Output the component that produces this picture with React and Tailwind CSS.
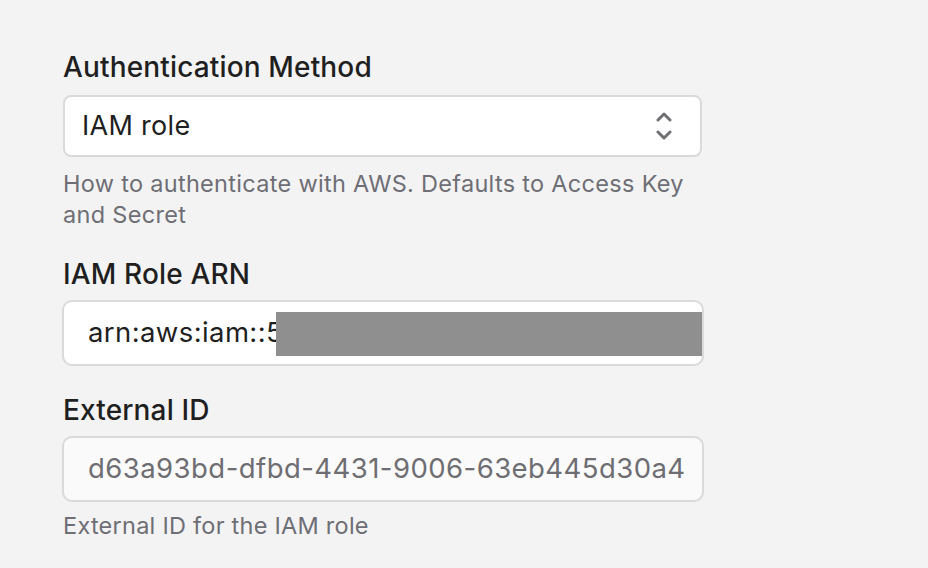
export default function App() {
  return (
    <main
      className="min-h-screen w-[928px] h-[568px] overflow-hidden bg-[#f3f3f3] text-[#1f1f1f]"
      style={{ fontFamily: "Inter, 'Noto Sans', sans-serif" }}
    >
      <div className="ml-[63px] w-[641px] pt-[50px]">
        {/* Auth method */}
        <label className="block text-[28px] leading-[34px] font-medium tracking-[0.15px]">Authentication Method</label>
        <div className="mt-[11px] w-[639px] h-[62px] flex items-center justify-between rounded-[8px] border-2 border-[#dadadd] bg-white pl-[17px] pr-[28px]">
          <span className="text-[27px] tracking-[0.3px]">IAM role</span>
          <svg width="16" height="30" viewBox="0 0 16 30" fill="none" stroke="#707074" strokeWidth="3" strokeLinecap="round" strokeLinejoin="round">
            <path d="M2 9 L8 3 L14 9" />
            <path d="M2 21 L8 27 L14 21" />
          </svg>
        </div>
        <p className="mt-[11px] text-[23.5px] leading-[31px] text-[#6e6e75] w-[630px] tracking-[0.3px]">
          How to authenticate with AWS. Defaults to Access Key and Secret
        </p>

        {/* Role ARN */}
        <label className="mt-[27px] block text-[28px] leading-[34px] font-medium tracking-[0.15px]">IAM Role ARN</label>
        <div className="relative mt-[9px] -ml-px w-[642px] h-[66px] flex items-center rounded-[10px] border-2 border-[#dadadd] bg-white pl-[24px] overflow-hidden">
          <span className="text-[27.5px] tracking-[0.4px] whitespace-nowrap">arn:aws:iam::5</span>
          <div className="absolute right-0 top-[10px] w-[426px] h-[44px] bg-[#8f8f8f]" />
        </div>

        {/* External ID */}
        <label className="mt-[27px] block text-[28px] leading-[34px] font-medium tracking-[0.15px]">External ID</label>
        <div className="mt-[9px] -ml-px w-[642px] h-[66px] flex items-center rounded-[10px] border-2 border-[#dadadd] bg-[#fafafa] pl-[24px]">
          <span className="text-[27.5px] text-[#6e6e72] tracking-[0.45px] whitespace-nowrap">d63a93bd-dfbd-4431-9006-63eb445d30a4</span>
        </div>
        <p className="mt-[8px] text-[23.5px] leading-[31px] text-[#6e6e75] tracking-[0.25px]">External ID for the IAM role</p>
      </div>
    </main>
  );
}
